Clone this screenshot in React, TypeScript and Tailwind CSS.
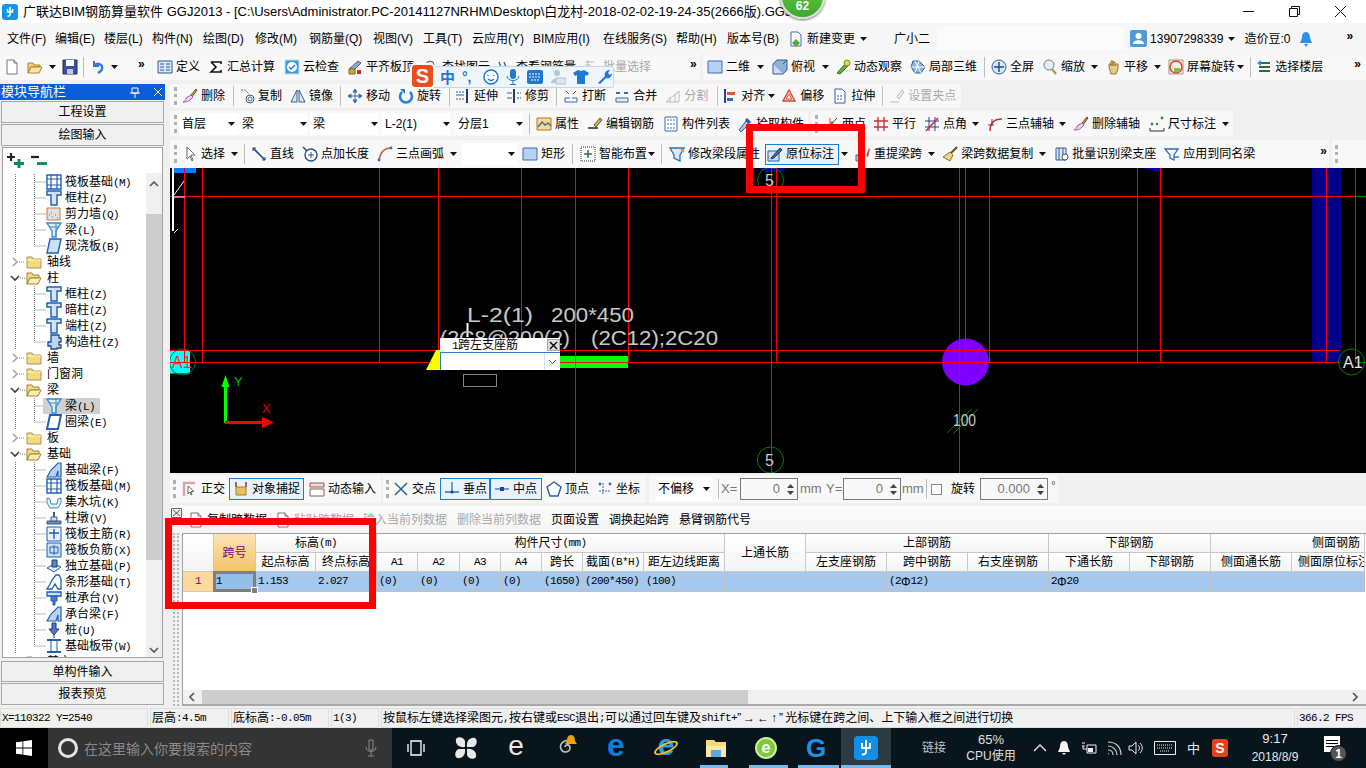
import React from "react";

const S = ({ children, w = 16, h = 16, vb }: { children: React.ReactNode; w?: number; h?: number; vb?: string }) => (
  <svg width={w} height={h} viewBox={vb || `0 0 ${w} ${h}`} className="shrink-0 block">{children}</svg>
);

const B = "#1f5fb4";
const I: Record<string, React.ReactNode> = {
  doc: <S><path d="M3 1h7l3 3v11H3z" fill="#fff" stroke="#777" /><path d="M10 1v3h3" fill="#ddd" stroke="#777" /></S>,
  open: <S><path d="M1 4h5l1 2h6v2H4L1 14z" fill="#f2cf74" stroke="#a8842c" /><path d="M4 8h11l-3 6H1z" fill="#fbe6a6" stroke="#a8842c" /></S>,
  save: <S><path d="M1 1h14v14H1z" fill="#3e4fa8" stroke="#20285c" /><path d="M4 1h8v6H4z" fill="#fff" /><path d="M5 10h6v5H5z" fill="#c8c8d8" /></S>,
  undo: <S><path d="M4 2v5h5" fill="none" stroke="#2d7fd6" strokeWidth="2" /><path d="M4 7c3-4 9-2 8 3-.4 2-2 3-4 4" fill="none" stroke="#2d7fd6" strokeWidth="2.4" /></S>,
  def: <S><path d="M1 2h14v12H1z" fill="#d9e6f5" stroke="#2a5d9c" /><path d="M3 5h4M3 8h4M3 11h4M9 5h4M9 8h4M9 11h4" stroke="#2a5d9c" /></S>,
  sigma: <S><path d="M3 3h10v2M3 3l5 5-5 5h10v-2" fill="none" stroke="#111" strokeWidth="1.6" /></S>,
  cloud: <S><path d="M1 1h14v14H1z" fill="#3d9be0" stroke="#bfe0f7" /><circle cx="8" cy="8" r="5" fill="#fff" /><path d="M5 8l2 2 4-4" fill="none" stroke="#2d7fd6" strokeWidth="1.5" /></S>,
  level: <S><path d="M2 10l9-8 3 2-8 8z" fill="#8ca7c8" stroke="#46658c" /><path d="M2 10h6v5H2z" fill="#d8a43c" stroke="#8a5c18" /><path d="M10 11h4v4h-4z" fill="#c8341c" /></S>,
  find: <S><circle cx="7" cy="6" r="4" fill="#bcd4ee" stroke="#4a6c96" /><path d="M10 9l4 5" stroke="#555" strokeWidth="2" /></S>,
  rebar: <S><path d="M2 3l4 10M7 3l4 10M2 8h12" stroke="#356aa8" strokeWidth="1.4" /></S>,
  batch: <S><path d="M1 3h9M1 6h6M4 1v13" stroke="#bbb" /><path d="M7 8h7v6H7z" fill="#eee" stroke="#bbb" /></S>,
  sq: <S><path d="M1 2h14v12H1z" fill="#b8d0f2" stroke="#3a6cb4" /></S>,
  cube: <S><path d="M1 5h10v10H1z" fill="#c8dcf4" stroke="#2d5f9c" /><path d="M1 5l4-4h10v10l-4 4M11 5l4-4" fill="#8fb0da" stroke="#2d5f9c" /></S>,
  orbit: <S><path d="M2 14l8-9 3 2-8 8z" fill="#6dae3c" stroke="#356a1c" /><circle cx="12" cy="4" r="3" fill="#e2d84c" stroke="#8a8420" /></S>,
  part: <S><path d="M3 2h6l6 6-4 6H5L1 8z" fill="#8fb4e0" stroke="#2d5f9c" /><path d="M5 2l6 12M9 2L5 14M1 8h14" stroke="#fff" /></S>,
  fit: <S><circle cx="8" cy="8" r="7" fill="#d8e6f6" stroke="#2d5f9c" /><path d="M8 3v10M3 8h10" stroke="#1c4c8c" strokeWidth="1.4" /></S>,
  mag: <S><circle cx="7" cy="6" r="5" fill="#e6eef8" stroke="#6a8098" /><path d="M10 10l4 5" stroke="#b89a40" strokeWidth="2.4" /></S>,
  hand: <S><path d="M4 8V5h2v2-5h2v5V3h2v4l1-2h2v5l-2 5H6z" fill="#e8c888" stroke="#9c7428" /></S>,
  turn: <S><path d="M1 1h14v14H1z" fill="#f4f0d8" stroke="#999" /><circle cx="8" cy="8" r="6" fill="none" stroke="#d84830" strokeWidth="1.6" /><path d="M6 9h6v4H6z" fill="#7cc04c" /></S>,
  floors: <S><path d="M3 4h11M3 8h11M3 12h11" stroke="#2d6f3c" strokeWidth="2" /><path d="M5 1L1 4l4 3" fill="#3a8fd8" /></S>,
  brush: <S><path d="M9 7l5-6 1 1-5 7z" fill="#c0a060" stroke="#6a4c20" /><path d="M9 7l2 2-3 3c-2 2-5 2-7 2 2-1 3-2 3-4z" fill="#ebd2e8" stroke="#a060a0" /></S>,
  copy: <S><circle cx="11" cy="11" r="4" fill="none" stroke="#555" /><circle cx="11" cy="11" r="2" fill="none" stroke="#2d6fb4" /><path d="M2 2h4l4 4" fill="none" stroke="#2d6fb4" strokeDasharray="2 1" /></S>,
  mirror: <S><path d="M7 2v12H1zM9 2v12h6z" fill="#d8e6f6" stroke="#3a5c8c" /></S>,
  move: <S><path d="M8 1v14M1 8h14M8 1L6 4h4zM8 15l-2-3h4zM1 8l3-2v4zM15 8l-3-2v4z" fill="#3a6fae" stroke="#3a6fae" /></S>,
  rot: <S><path d="M12 4a6 6 0 1 1-8 0" fill="none" stroke="#2d7fd6" strokeWidth="2.6" /><path d="M2 1h5v5z" fill="#2d7fd6" /></S>,
  ext: <S><path d="M1 4h8M1 11h8" stroke="#2d5f9c" strokeDasharray="2 1" /><path d="M12 1v14" stroke="#1c3c6c" strokeWidth="2" /><path d="M1 7h8" stroke="#2d5f9c" /></S>,
  trim: <S><path d="M8 1v14" stroke="#1c3c6c" strokeWidth="2" /><path d="M1 5h5M1 10h5" stroke="#2d5f9c" /><path d="M11 5h4M11 10h4" stroke="#2d5f9c" strokeDasharray="2 1" /></S>,
  brk: <S><path d="M2 10h5M9 10h5M2 10v4h12v-4" fill="none" stroke="#2d6fb4" /><path d="M3 3l3 3M13 3l-3 3" stroke="#555" /></S>,
  mrg: <S><path d="M2 10h12v4H2z" fill="#e6eef8" stroke="#2d6fb4" /><path d="M2 5h4M14 5h-4" stroke="#2d6fb4" strokeWidth="2" /></S>,
  spl: <S><path d="M1 14L14 3v11z" fill="none" stroke="#bbb" /><path d="M5 14V9M10 14V6" stroke="#bbb" /></S>,
  alg: <S><path d="M3 1v14" stroke="#2d3f9c" strokeWidth="2" /><path d="M5 4h8v3H5z" fill="#e8503c" /><path d="M5 10h6v3H5z" fill="#2d6fb4" /></S>,
  off: <S><path d="M8 2l6 11H2z" fill="#f8d8d0" stroke="#d84830" strokeWidth="1.4" /><path d="M8 6l3 5H5z" fill="#fff" stroke="#d84830" /></S>,
  str: <S><path d="M3 1h7l3 3v11H3z" fill="#fff" stroke="#2d5f9c" /><path d="M5 8h6M5 11h6" stroke="#2d5f9c" strokeDasharray="2 1" /></S>,
  setg: <S><path d="M1 14h9" stroke="#bbb" /><path d="M8 9l5-7 2 2-5 7z" fill="#eee" stroke="#bbb" /></S>,
  attr: <S><path d="M1 2h14v12H1z" fill="#f6d890" stroke="#a87c28" /><path d="M2 11l4-5 3 3 3-2 3 3" fill="none" stroke="#4a6c96" strokeWidth="1.4" /></S>,
  edit: <S><path d="M1 12h10" stroke="#333" strokeWidth="1.6" /><path d="M7 9l6-7 2 2-6 7z" fill="#d0b070" stroke="#6a4c20" /></S>,
  list: <S><path d="M2 1h12v14H2z" fill="#fff" stroke="#3a6cb4" /><path d="M4 4h8M4 8h8M4 12h8" stroke="#3a6cb4" strokeDasharray="2 1" /></S>,
  pick: <S><path d="M2 14l7-9 3 3-8 8z" fill="#a8c4e8" stroke="#2d5f9c" /><path d="M9 3l4 4" stroke="#2d5f9c" strokeWidth="3" /></S>,
  two: <S><path d="M3 14L14 2" stroke="#444" /><path d="M7 2v13M1 9h13" stroke="#d84830" /><circle cx="9" cy="7" r="1.4" fill="#3a8f3c" /></S>,
  par: <S><path d="M5 1v14M11 1v14M1 5h14M1 11h14" stroke="#d02c2c" strokeWidth="1.3" /></S>,
  ang: <S><path d="M5 1v14M11 1v14M1 5h14M1 11h14" stroke="#2d3f9c" /><path d="M2 15L14 2" stroke="#d02c2c" strokeWidth="1.6" /></S>,
  arc3: <S><path d="M3 15C3 7 7 3 15 3" fill="none" stroke="#d02c2c" strokeWidth="1.5" /><path d="M1 9h6M5 3v6" stroke="#444" /></S>,
  dim: <S><path d="M1 15h14M1 12v3M15 12v3" stroke="#333" /><circle cx="3" cy="8" r="1.4" fill="#3a8f3c" /><circle cx="13" cy="2" r="1.4" fill="#3a8f3c" /><circle cx="8" cy="8" r="1.2" fill="#3a8f3c" /></S>,
  sel: <S><path d="M5 1v12l3-3 2 5 1-1-2-5h4z" fill="#fff" stroke="#667" /></S>,
  line: <S><path d="M2 2l12 12" stroke="#1f4f8c" strokeWidth="1.6" /><path d="M2 2v3M2 2h3M14 14v-3M14 14h-3" stroke="#1f4f8c" /></S>,
  plen: <S><circle cx="9" cy="9" r="6" fill="#fff" stroke="#2d4f8c" strokeWidth="1.4" /><path d="M9 6v6M6 9h6" stroke="#2d4f8c" /><path d="M1 1l4 4" stroke="#2d4f8c" strokeWidth="1.6" /></S>,
  arc: <S><path d="M2 15C3 7 7 2 14 2" fill="none" stroke="#d06030" strokeWidth="1.7" /><circle cx="2" cy="14" r="1.4" fill="#2d6fb4" /><circle cx="14" cy="2" r="1.4" fill="#2d6fb4" /></S>,
  smart: <S><path d="M1 1h14v14H1z" fill="#fff" stroke="#333" strokeDasharray="1 1" /><path d="M8 4v8M4 8h8" stroke="#2d6f3c" strokeWidth="1.5" /></S>,
  funnel: <S><path d="M1 2h14l-4 7v6l-6-3V9z" fill="#d8e6f6" stroke="#2d6fb4" strokeWidth="1.3" /><path d="M12 3l3 3" stroke="#d8a43c" strokeWidth="2" /></S>,
  mark: <S><path d="M1 5h11v10H1z" fill="#cfe0f4" stroke="#2d5f9c" /><path d="M5 11l8-9 2 2-8 8-3 1z" fill="#3a6cb4" stroke="#1c3c6c" /></S>,
  rex: <S><path d="M1 15V9h3v6zM6 15V9h3v6z" fill="#a8c4e8" stroke="#4a6c96" /><path d="M11 10l3-8 1 1-2 8z" fill="#d84830" /></S>,
  broom: <S><path d="M15 1L8 8" stroke="#6a4c20" strokeWidth="2" /><path d="M8 6l3 3-3 6-7-4z" fill="#ecd88c" stroke="#8a7020" /></S>,
  bid: <S><path d="M3 2h10v12H3z" fill="#dde8f4" stroke="#2d5f9c" /><path d="M6 2v12M10 2v12" stroke="#2d5f9c" /><circle cx="12" cy="11" r="3" fill="#fff" stroke="#555" /></S>,
  app: <S><path d="M1 3h13l-4 6v5l-4-2V9z" fill="#fff" stroke="#2d6fb4" strokeWidth="1.3" /><path d="M10 11h5" stroke="#2d6fb4" strokeWidth="1.3" /></S>,
  ortho: <S><path d="M2 15V2h11" fill="none" stroke="#d8a8a0" strokeWidth="2.4" /><path d="M6 5v8l2-2 1 3 1-.5-1-3h3z" fill="#fff" stroke="#667" /></S>,
  snap: <S><path d="M3 1v5M13 1v5" stroke="#7a4020" strokeWidth="1.5" /><path d="M3 6h10v8H3z" fill="#e8c060" stroke="#a87c28" /></S>,
  dyn: <S><path d="M1 2h14v4H1z" fill="#f8d8d0" stroke="#8a6050" /><path d="M1 8h14v7H1z" fill="#fff" stroke="#8a6050" /></S>,
  cross: <S><path d="M2 2l12 12M14 2L2 14" stroke="#2d5f9c" strokeWidth="1.5" /></S>,
  perp: <S><path d="M8 1v10M1 11h14" stroke="#2d6fb4" strokeWidth="1.3" /><circle cx="8" cy="11" r="1.6" fill="#1f3f9c" /></S>,
  mid: <S><path d="M1 8h14" stroke="#2d6fb4" strokeWidth="1.3" /><rect x="6" y="6" width="4" height="4" fill="#1f3f9c" /></S>,
  pent: <S><path d="M8 1l7 5-3 9H4L1 6z" fill="#fff" stroke="#2d5f9c" strokeWidth="1.4" /></S>,
  coord: <S><path d="M6 2v12M2 10h12" stroke="#2d6fb4" strokeDasharray="2 1" /><circle cx="3" cy="3" r="1.4" fill="#2d6fb4" /><circle cx="13" cy="3" r="1.4" fill="#2d6fb4" /></S>,
  chg: <S><path d="M3 1h7l3 3v11H3z" fill="#fff" stroke="#3a6cb4" /><path d="M8 8l4 4-4 4-4-4z" fill="#5aa838" /></S>,
  user: <S w={17} h={17}><rect width="17" height="17" rx="2" fill="#4f9ad8" /><circle cx="8.5" cy="6" r="3" fill="#fff" /><path d="M3 14c0-5 11-5 11 0z" fill="#fff" /></S>,
  bell: <S><path d="M8 1c3 0 4 3 4 6l2 5H2l2-5c0-3 1-6 4-6z" fill="#2d8fe8" /><path d="M6 13h4l-2 3z" fill="#2d8fe8" /></S>,
};

const Tc = {
  col: <S><path d="M1 1h14v4h-4v10H5V5H1z" fill="#d4e4f8" stroke={B} strokeWidth="1.4" /></S>,
  beam: <S><path d="M1 1h14L10 9v6H6V9z" fill="#dcecfa" stroke="#3a8cd0" strokeWidth="1.3" /><path d="M4 5h8M10 1v14" stroke="#3a8cd0" /></S>,
  wall: <S><path d="M1 2h13v12H1z" fill="#e0e0e0" stroke="#d87830" /><path d="M3 9h1M6 11h1M9 9h1M11 12h1M5 7h1" stroke="#777" /></S>,
  slab: <S><path d="M4 1h11l-3 14H1z" fill="#cde0f8" stroke={B} strokeWidth="1.4" /></S>,
  raft: <S><path d="M1 1h14v14H1z" fill="#fff" stroke={B} strokeWidth="1.4" /><path d="M5 1v14M11 1v14M1 5h14M1 11h14" stroke={B} strokeWidth="1.2" /></S>,
  gz: <S><path d="M5 1h8v3h2v4h-2v3h2v3h-4v1H5v-3H2V8h3z" fill="#bcd4f0" stroke="#1c4c8c" strokeWidth="1.3" /></S>,
  fb: <S><path d="M1 15l4-7 7-7h3v14h-3V9l-2 6z" fill="#b8d4f4" stroke={B} strokeWidth="1.2" /></S>,
  pit: <S><path d="M1 4l3 1 1 5h6l1-5 3-1v5l-3 5H4L1 9z" fill="#e4effa" stroke="#3a8cd0" /></S>,
  pier: <S><path d="M1 11h14v3H1z" fill="#6c8ab0" stroke="#3a5c8c" /><path d="M5 7h6v4H5z" fill="#d0d8e4" stroke="#3a5c8c" /><path d="M7 2h2v5H7z" fill="#3a5c8c" /></S>,
  rm: <S><path d="M1 1h14v14H1z" fill="#e8f0fb" stroke={B} /><path d="M8 3v10M3 7h10" stroke={B} strokeWidth="1.4" /></S>,
  rn: <S><path d="M1 1h14v14H1z" fill="#cfe0f6" stroke={B} /><path d="M4 5h8v6H4zM8 3v10" fill="none" stroke={B} /></S>,
  iso: <S><path d="M1 10l7-4 7 3-7 5z" fill="#dce8f6" stroke={B} /><path d="M6 2h5v7H6z" fill="#5c88c0" stroke="#1c3c6c" /></S>,
  st: <S><path d="M1 15l3-5 2-4 4-5h3l2 4v10h-3l-3-5-3 5z" fill="#fff" stroke={B} strokeWidth="1.3" /></S>,
  cap: <S><path d="M1 2h14v4H1z" fill="#cde0f8" stroke={B} strokeWidth="1.3" /><path d="M5 6h6v5H5zM7 11h2v4H7z" fill="#4a7cc0" stroke={B} /></S>,
  pile: <S><path d="M6 1h4v6h3l-5 6-5-6h3z" fill="#4a7cc0" stroke="#1c3c6c" /><path d="M8 13v3" stroke="#1c3c6c" /></S>,
  band: <S><path d="M1 2h14M1 14h14" stroke={B} strokeWidth="2" /><path d="M5 2v12M11 2v12" stroke={B} /></S>,
  ring: <S><path d="M4 1h11l-3 14H1z" fill="#fff" stroke={B} strokeWidth="2" /></S>,
};

const Sim = ({ t }: { t: string }) => (
  <>
    {t.split(/([\x00-\x7f]+)/).filter(Boolean).map((p, i) =>
      /^[\x00-\x7f]/.test(p) ? (
        <span key={i} className="font-['Liberation_Mono'] text-[11px] tracking-[-0.6px]">{p}</span>
      ) : (
        <span key={i}>{p}</span>
      )
    )}
  </>
);

const T = ({ i, t, c = "", g = false }: { i: string; t: string; c?: string; g?: boolean }) => (
  <div className={`flex items-center gap-[3px] shrink-0 ${c} ${g ? "text-[#a8a8a8]" : ""}`}>
    {I[i]}
    <span className="whitespace-nowrap leading-4">{t}</span>
  </div>
);
const Caret = ({ c = "" }: { c?: string }) => (
  <svg width="7" height="4" viewBox="0 0 7 4" className={`shrink-0 ${c}`}><path d="M0 0h7L3.5 4z" fill="#111" /></svg>
);
const Sep = ({ c = "" }: { c?: string }) => <div className={`w-px h-[20px] bg-[#bdbdbd] shrink-0 ${c}`} />;
const Grip = ({ c = "" }: { c?: string }) => <div className={`w-[3px] h-[18px] border-l-[3px] border-dotted border-[#b0b0b0] shrink-0 ${c}`} />;
const More = ({ c = "" }: { c?: string }) => <span className={`text-[12px] leading-3 font-bold shrink-0 -mt-[6px] ${c}`}>»</span>;
const Sel = ({ t, c }: { t: string; c: string }) => (
  <div className={`h-[22px] bg-white flex items-center justify-between pl-[3px] shrink-0 ${c}`}>
    <span>{t}</span>
    <Caret />
  </div>
);
const Bar = ({ c, children }: { c: string; children?: React.ReactNode }) => (
  <div className={`flex items-center bg-[#f8f8f8] rounded-[2px] shrink-0 ${c}`}>{children}</div>
);

const Menu = ({ t, c }: { t: string; c: string }) => <span className={`shrink-0 whitespace-nowrap ${c}`}>{t}</span>;

type Row = { k: "f" | "o" | "c"; t: string; i?: React.ReactNode; last?: boolean; sel?: boolean };
const rows: Row[] = [
  { k: "c", t: "筏板基础(M)", i: Tc.raft },
  { k: "c", t: "框柱(Z)", i: Tc.col },
  { k: "c", t: "剪力墙(Q)", i: Tc.wall },
  { k: "c", t: "梁(L)", i: Tc.beam },
  { k: "c", t: "现浇板(B)", i: Tc.slab, last: true },
  { k: "f", t: "轴线" },
  { k: "o", t: "柱" },
  { k: "c", t: "框柱(Z)", i: Tc.col },
  { k: "c", t: "暗柱(Z)", i: Tc.col },
  { k: "c", t: "端柱(Z)", i: Tc.col },
  { k: "c", t: "构造柱(Z)", i: Tc.gz, last: true },
  { k: "f", t: "墙" },
  { k: "f", t: "门窗洞" },
  { k: "o", t: "梁" },
  { k: "c", t: "梁(L)", i: Tc.beam, sel: true },
  { k: "c", t: "圈梁(E)", i: Tc.ring, last: true },
  { k: "f", t: "板" },
  { k: "o", t: "基础" },
  { k: "c", t: "基础梁(F)", i: Tc.fb },
  { k: "c", t: "筏板基础(M)", i: Tc.raft },
  { k: "c", t: "集水坑(K)", i: Tc.pit },
  { k: "c", t: "柱墩(V)", i: Tc.pier },
  { k: "c", t: "筏板主筋(R)", i: Tc.rm },
  { k: "c", t: "筏板负筋(X)", i: Tc.rn },
  { k: "c", t: "独立基础(P)", i: Tc.iso },
  { k: "c", t: "条形基础(T)", i: Tc.st },
  { k: "c", t: "桩承台(V)", i: Tc.cap },
  { k: "c", t: "承台梁(F)", i: Tc.fb },
  { k: "c", t: "桩(U)", i: Tc.pile },
  { k: "c", t: "基础板带(W)", i: Tc.band, last: true },
  { k: "f", t: "其它" },
];

const Folder = ({ open }: { open: boolean }) => (
  <S>
    {open ? (
      <>
        <path d="M1 3h5l1 2h6v3H4l-3 6z" fill="#f4d98c" stroke="#a8842c" />
        <path d="M4 8h11l-3 6H1z" fill="#fdeebc" stroke="#a8842c" />
      </>
    ) : (
      <>
        <path d="M1 3h5l1 2h8v9H1z" fill="#f7d97e" stroke="#b0944a" />
        <path d="M1 6h14" stroke="#fff3c8" />
      </>
    )}
  </S>
);

const TreeRow = ({ r }: { r: Row }) => {
  const child = r.k === "c";
  return (
    <div className="h-4 flex items-center relative shrink-0">
      <svg width="46" height="16" viewBox="0 0 46 16" className="shrink-0 block">
        {child ? (
          <>
            <path d="M15.5 0v16" stroke="#777" strokeDasharray="1 1" />
            <path d={r.last ? "M34.5 0v8h11" : "M34.5 0v16M34.5 8h11"} fill="none" stroke="#777" strokeDasharray="1 1" />
          </>
        ) : r.k === "f" ? (
          <>
            <path d="M13 4l4 4-4 4" fill="none" stroke="#a6a6a6" strokeWidth="1.6" />
            <path d="M19 8h6" stroke="#777" strokeDasharray="1 1" />
            <foreignObject x="26" y="0" width="16" height="16"><Folder open={false} /></foreignObject>
          </>
        ) : (
          <>
            <path d="M11 6l4 4 4-4" fill="none" stroke="#404040" strokeWidth="1.6" />
            <path d="M20 8h5" stroke="#777" strokeDasharray="1 1" />
            <foreignObject x="26" y="0" width="16" height="16"><Folder open /></foreignObject>
          </>
        )}
      </svg>
      {child ? (
        <div className={`flex items-center h-4 ${r.sel ? "bg-[#d0d0d0] -ml-[3px] pl-[3px] pr-[5px]" : ""}`}>
          {r.i}
          <span className="ml-[3px] whitespace-nowrap leading-4"><Sim t={r.t} /></span>
        </div>
      ) : (
        <span className="ml-px whitespace-nowrap leading-4"><Sim t={r.t} /></span>
      )}
    </div>
  );
};

const Left = () => (
  <div className="w-[165px] h-[622px] shrink-0 flex flex-col">
    <div className="h-[16px] bg-[#0b5ed7] text-white flex items-center pl-px text-[13px] shrink-0">
      <span className="flex-1">模块导航栏</span>
      <svg width="10" height="11" viewBox="0 0 10 11" className="mr-[14px]"><path d="M2 1h6v5H2zM0 6h10M5 6v5" fill="none" stroke="#fff" /></svg>
      <svg width="8" height="8" viewBox="0 0 8 8" className="mr-[3px]"><path d="M0 0l8 8M8 0L0 8" stroke="#fff" /></svg>
    </div>
    <div className="h-[22px] mt-px mx-px bg-[#f0f0f0] border border-[#a8a8a8] flex items-center justify-center shrink-0">工程设置</div>
    <div className="h-[22px] mt-px mx-px bg-[#f0f0f0] border border-[#a8a8a8] flex items-center justify-center shrink-0">绘图输入</div>
    <div className="mt-px mx-[2px] h-[511px] border border-[#a0a0a0] bg-white shrink-0 flex flex-col overflow-hidden relative">
      <div className="h-[25px] flex items-center pl-[3px] gap-[6px] shrink-0">
        <S w={18} h={15}><path d="M5 0v8M1 4h8" stroke="#222" strokeWidth="2.200" /><path d="M13 6v9M8 10.500h10" stroke="#0a8a5a" strokeWidth="2.800" /></S>
        <S w={18} h={15}><path d="M1 4h8" stroke="#222" strokeWidth="2.200" /><path d="M7 10.500h10" stroke="#0a8a5a" strokeWidth="2.800" /></S>
      </div>
      <div className="flex min-h-0 flex-1">
        <div className="flex-1 flex flex-col overflow-hidden -ml-[3px]"><div className="h-[1px] shrink-0" />{rows.map((r, i) => <TreeRow key={i} r={r} />)}</div>
        <div className="w-[16px] bg-[#f0f0f0] flex flex-col items-center shrink-0">
          <svg width="10" height="6" viewBox="0 0 10 6" className="mt-[8px] shrink-0"><path d="M1 5l4-4 4 4" fill="none" stroke="#555" strokeWidth="1.6" /></svg>
          <div className="w-full h-[346px] mt-[27px] bg-[#cdcdcd] shrink-0" />
          <svg width="10" height="6" viewBox="0 0 10 6" className="mt-[87px] shrink-0"><path d="M1 1l4 4 4-4" fill="none" stroke="#555" strokeWidth="1.6" /></svg>
        </div>
      </div>
    </div>
    <div className="h-[21px] mt-[3px] mx-px bg-[#f0f0f0] border border-[#a8a8a8] flex items-center justify-center shrink-0">单构件输入</div>
    <div className="h-[22px] mt-px mx-px bg-[#f0f0f0] border border-[#a8a8a8] flex items-center justify-center shrink-0">报表预览</div>
  </div>
);

const Canvas = () => {
  const red = "#ff0000";
  const long = [184.5, 202.5, 379.5, 438.5, 521.5, 628.5, 771.5, 776.5, 959.5, 965.5, 989.5, 1137.5, 1160.5, 1326.5, 1355.5];
  return (
    <div className="h-[305px] shrink-0 bg-black relative overflow-hidden">
      <svg width="1196" height="305" viewBox="170 168 1196 305" className="block">
        <rect x="174" y="168" width="22" height="5" fill="#0080ff" />
        <path d="M760 168h27l-6 4h-15zM1142 168h18v4z" fill="#0000b0" />
        <rect x="1312" y="168" width="29" height="194" fill="#00008b" />
        <rect x="170" y="350.5" width="20" height="23" fill="#00ffff" />
        <rect x="560" y="356" width="68" height="12" fill="#00ff00" />
        <ellipse cx="965.5" cy="362" rx="23.5" ry="23.5" fill="#8000ff" />
        {long.map((x) => <path key={x} d={`M${x} 168V362`} stroke={red} />)}
        <path d="M575.5 168V473" stroke={red} />
        <path d="M170 196.5H1356M170 350.5H1340M170 362.5H1340" stroke={red} />
        <path d="M771.5 362V473M959.5 362V473M1356 196.5h10M1356 362.5h10" stroke="#008000" />
        <path d="M173 168v63" stroke="#fff" strokeWidth="2" />
        <path d="M172 197h13M174 195l10-14M174 233l4-4" stroke="#fff" />
        <path d="M467.5 323v14" stroke="#fff" strokeWidth="2" />
        <path d="M426 370l10-20h4v20z" fill="#ffff00" />
        <rect x="463.5" y="374.5" width="33" height="12" fill="none" stroke="#808080" />
        <path d="M225.5 375l-4 12h2.500v36h3v-36h2.500z" fill="#00ff00" />
        <path d="M225 424v-3h37v-4l12 5.500-12 5.500v-4z" fill="#ff0000" />
        <text x="234" y="386" fill="#00c000" fontSize="13" fontFamily="Liberation Sans">Y</text>
        <text x="262" y="413" fill="#e00000" fontSize="13" fontFamily="Liberation Sans">X</text>
        <g fill="none" stroke="#008000">
          <circle cx="182.5" cy="362" r="13" />
          <circle cx="1351.5" cy="362" r="13" />
          <circle cx="770.500" cy="180.500" r="13" />
          <circle cx="770.500" cy="460" r="13" />
          <path d="M947 433l24.500-24M953 434l25-25" />
        </g>
        <g fontFamily="Liberation Sans" fill="#c8c8c8">
          <text x="172" y="368" fontSize="16" fill="#ff3030">A1</text>
          <text x="1343" y="368" fontSize="16" fill="#e8e8e8">A1</text>
          <text x="765" y="186" fontSize="16">5</text>
          <text x="765" y="466" fontSize="16">5</text>
          <text x="953" y="426" fontSize="16" textLength="23" lengthAdjust="spacingAndGlyphs">100</text>
          <text x="467" y="322" fontSize="20" textLength="66" lengthAdjust="spacingAndGlyphs">L-2(1)</text>
          <text x="551" y="322" fontSize="20" textLength="83" lengthAdjust="spacingAndGlyphs">200*450</text>
          <text x="440" y="345" fontSize="20" textLength="130" lengthAdjust="spacingAndGlyphs">(2C8@200(2)</text>
          <text x="591" y="345" fontSize="20" textLength="127" lengthAdjust="spacingAndGlyphs">(2C12);2C20</text>
        </g>
      </svg>
      <div className="absolute left-[270px] top-[170px] w-[120px] h-[32px] bg-white flex flex-col">
        <div className="h-[14px] flex items-center justify-between shrink-0">
          <span className="pl-[12px] leading-3"><Sim t="1跨左支座筋" /></span>
          <div className="w-[13px] h-[12px] bg-[#dcdcdc] border border-[#aaa] flex items-center justify-center">
            <svg width="9" height="9" viewBox="0 0 9 9"><path d="M1 1l7 7M8 1L1 8" stroke="#000" strokeWidth="1.4" /></svg>
          </div>
        </div>
        <div className="flex-1 border-t border-l border-[#2f7fc8] flex justify-end">
          <div className="w-[16px] border-l border-[#cfe0f0] flex items-center justify-center">
            <svg width="9" height="6" viewBox="0 0 9 6"><path d="M1 1l3.500 3.500L8 1" fill="none" stroke="#555" /></svg>
          </div>
        </div>
      </div>
    </div>
  );
};

const Spin = ({ v, c }: { v: string; c: string }) => (
  <div className={`h-[22px] border border-[#7a7a7a] bg-[#f8f8f8] flex items-center justify-end shrink-0 text-[#777] ${c}`}>
    <span className="text-[13px]">{v}</span>
    <div className="w-[13px] ml-[4px] flex flex-col items-center gap-[3px]">
      <svg width="7" height="4" viewBox="0 0 7 4"><path d="M0 4h7L3.500 0z" fill="#444" /></svg>
      <svg width="7" height="4" viewBox="0 0 7 4"><path d="M0 0h7L3.500 4z" fill="#444" /></svg>
    </div>
  </div>
);

const Status = () => (
  <div className="h-[28px] mt-[2px] flex items-center shrink-0">
    <Bar c="w-[211px] h-[28px] pl-[3px]">
      <Grip />
      <T i="ortho" t="正交" c="ml-[6px]" />
      <T i="snap" t="对象捕捉" c="ml-[4px] w-[75px] h-[22px] pl-[3px] border border-[#1a7fd4] bg-[#e8f2fb]" />
      <T i="dyn" t="动态输入" c="ml-[5px]" />
    </Bar>
    <Bar c="ml-[2px] w-[263px] h-[28px] pl-[3px]">
      <Grip />
      <T i="cross" t="交点" c="ml-[4px]" />
      <T i="perp" t="垂点" c="ml-[4px] w-[50px] h-[22px] pl-[3px] border border-[#1a7fd4] bg-[#e8f2fb]" />
      <T i="mid" t="中点" c="w-[52px] h-[22px] pl-[3px] border border-[#1a7fd4] bg-[#e8f2fb]" />
      <T i="pent" t="顶点" c="ml-[4px]" />
      <T i="coord" t="坐标" c="ml-[8px]" />
    </Bar>
    <Bar c="ml-[3px] w-[409px] h-[28px] pl-[7px]">
      <div className="w-[56px] h-[24px] bg-white flex items-center justify-between pl-[2px] pr-[2px] shrink-0">
        <span>不偏移</span>
        <Caret />
      </div>
      <Sep c="ml-[6px]" />
      <span className="ml-[2px] w-[19px] text-[13px] text-[#777] shrink-0">X=</span>
      <Spin v="0" c="w-[58px]" />
      <span className="ml-[2px] w-[26px] text-[13px] text-[#777] shrink-0">mm</span>
      <span className="w-[17px] text-[13px] text-[#777] shrink-0">Y=</span>
      <Spin v="0" c="w-[58px]" />
      <span className="ml-px w-[24px] text-[13px] text-[#777] shrink-0">mm</span>
      <Sep />
      <div className="ml-[4px] w-[11px] h-[11px] border border-[#888] bg-white shrink-0" />
      <span className="ml-[9px] shrink-0">旋转</span>
      <Spin v="0.000" c="ml-[5px] w-[68px]" />
      <span className="ml-[3px] text-[#555] shrink-0 -mt-[6px]">°</span>
    </Bar>
  </div>
);

const H = ({ t, c = "" }: { t: string; c?: string }) => (
  <div className={`border-r border-b border-[#c8c8c8] bg-gradient-to-b from-white to-[#f4f4f4] flex items-center justify-center overflow-hidden whitespace-nowrap ${c}`}>
    <Sim t={t} />
  </div>
);
const D = ({ t = "", c = "" }: { t?: string; c?: string }) => (
  <div className={`border-r border-b border-[#c0c0c0] bg-[#a6c8ec] flex items-center pl-[2px] overflow-hidden whitespace-nowrap ${c}`}>
    <Sim t={t} />
  </div>
);

const Table = () => (
  <div className="flex-1 min-h-0 flex">
    <div className="w-[12px] bg-[#f0f0f0] shrink-0 flex justify-center">
      <div className="w-[6px] h-full border-x-2 border-dotted border-[#b8b8b8]" />
    </div>
    <div className="flex-1 border-l border-[#a0a0a0] border-t border-b-2 border-b-[#a8a8a8] bg-white flex flex-col min-w-0">
      <div className="flex-1 min-h-0">
        <div className="grid grid-cols-[31px_42px_60px_61px_41px_42px_41px_41px_41px_61px_81px_81px_81px_81px_81px_81px_81px_81px_73px] grid-rows-[19px_19px_20px]">
          <H t="" c="row-span-2" />
          <div className="row-span-2 bg-gradient-to-b from-[#fde3b4] to-[#f3c367] border-r border-b border-[#c8c8c8] text-[#800080] flex items-center justify-center">跨号</div>
          <H t="标高(m)" c="col-span-2" />
          <H t="构件尺寸(mm)" c="col-span-7" />
          <H t="上通长筋" c="row-span-2" />
          <H t="上部钢筋" c="col-span-3" />
          <H t="下部钢筋" c="col-span-2" />
          <H t="侧面钢筋" c="col-span-2 justify-end pr-[4px]" />
          {["起点标高", "终点标高", "A1", "A2", "A3", "A4", "跨长", "截面(B*H)", "距左边线距离", "左支座钢筋", "跨中钢筋", "右支座钢筋", "下通长筋", "下部钢筋", "侧面通长筋", "侧面原位标注"].map((t, i) => (
            <H key={i} t={t} c={t === "侧面原位标注" ? "justify-start pl-[6px]" : ""} />
          ))}
          <div className="bg-[#fbd99a] border-r border-b border-[#c8c8c8] flex items-center justify-center text-[#800080]"><Sim t="1" /></div>
          <div className="bg-[#93bfe9] border-[3px] border-[#7f7f7f] flex items-center relative -mt-px -ml-px"><Sim t="1" /><div className="absolute -right-[5px] -bottom-[5px] w-[5px] h-[5px] bg-[#7f7f7f] border border-white box-content" /></div>
          <D t="1.153" />
          <D t="2.027" />
          <D t="(0)" />
          <D t="(0)" />
          <D t="(0)" />
          <D t="(0)" />
          <D t="(1650)" />
          <D t="(200*450)" />
          <D t="(100)" />
          <D />
          <D />
          <D t="(2Φ12)" />
          <D />
          <D t="2Φ20" />
          <D />
          <D />
          <D />
        </div>
      </div>
      <div className="h-[14px] bg-[#f0f0f0] flex items-center shrink-0">
        <svg width="6" height="10" viewBox="0 0 6 10" className="ml-[6px]"><path d="M5 1L1 5l4 4" fill="none" stroke="#555" strokeWidth="1.6" /></svg>
        <div className="ml-[7px] w-[546px] h-full bg-[#cdcdcd]" />
        <svg width="6" height="10" viewBox="0 0 6 10" className="ml-auto mr-[8px]"><path d="M1 1l4 4-4 4" fill="none" stroke="#555" strokeWidth="1.6" /></svg>
      </div>
    </div>
  </div>
);

const Cell = ({ c, children }: { c: string; children: React.ReactNode }) => (
  <div className={`h-[20px] bg-[#f0f0f0] border border-[#dedede] flex items-center pl-px overflow-hidden whitespace-nowrap shrink-0 ${c}`}>{children}</div>
);

const tiles = "w-[50px] h-[40px] flex items-center justify-center shrink-0 relative";
const Under = ({ c }: { c: string }) => <div className={`absolute bottom-0 h-[3px] bg-[#76b9ed] ${c}`} />;
const Taskbar = () => (
  <div className="h-[40px] bg-[#08151c] flex items-center text-white shrink-0">
    <div className="w-[48px] h-full bg-black flex items-center justify-center shrink-0">
      <svg width="16" height="16" viewBox="0 0 16 16"><path d="M0 2.300l6.500-.9v6.200H0zM7.300 1.300L16 0v7.600H7.300zM0 8.400h6.500v6.200L0 13.700zM7.300 8.400H16V16l-8.700-1.300z" fill="#fff" /></svg>
    </div>
    <div className="w-[344px] h-full bg-[#343434] flex items-center shrink-0">
      <div className="ml-[10px] w-[20px] h-[20px] rounded-full border-[3px] border-[#e4e4e4] shrink-0" />
      <span className="ml-[6px] text-[14px] text-[#8a8a8a] flex-1 font-['Noto_Sans_CJK_SC']">在这里输入你要搜索的内容</span>
      <svg width="12" height="18" viewBox="0 0 12 18" className="mr-[15px]"><path d="M4 1h4v10H4zM1 8c0 6 10 6 10 0M6 13v4M3 17h6" fill="none" stroke="#8a8a8a" /></svg>
    </div>
    <div className={`${tiles} -ml-px`}><svg width="20" height="16" viewBox="0 0 20 16"><path d="M5 1h10v14H5zM2 4v8M18 4v8" fill="none" stroke="#fff" strokeWidth="1.3" /></svg></div>
    <div className={tiles}><svg width="24" height="24" viewBox="0 0 24 24"><g fill="#e8e8e8"><path d="M11 11C5 12 1 8 2 3c2-3 8-2 9 2zM13 11c-1-6 3-10 8-9 3 2 2 8-2 9zM13 13c6-1 10 3 9 8-2 3-8 2-9-2zM11 13c1 6-3 10-8 9-3-2-2-8 2-9z" /></g></svg></div>
    <div className={tiles}>
      <span className="text-[28px] leading-none text-[#e8e8e8] font-['Liberation_Sans'] -mt-1">e</span>
    </div>
    <div className={tiles}>
      <svg width="28" height="26" viewBox="0 0 28 26"><path d="M13 12c0-3 5-3 5 1s-7 6-9 1 3-10 9-8" fill="none" stroke="#c0c0c0" strokeWidth="1.6" /><path d="M19 0c3 0 4 3 4 6l2 3H13l2-3c0-3 1-6 4-6z" fill="#e8a80c" /></svg>
    </div>
    <div className={tiles}><span className="text-[32px] leading-none font-bold text-[#0f7dd8] font-['Liberation_Sans'] -mt-[6px]">e</span></div>
    <div className={tiles}>
      <div className="relative w-[26px] h-[26px] flex items-center justify-center">
        <span className="text-[30px] leading-none font-bold text-[#2f9be8] font-['Liberation_Sans'] -mt-[6px]">e</span>
        <div className="absolute inset-x-0 top-[8px] h-[10px] rounded-[50%] border-2 border-[#e8c020] -rotate-[25deg]" />
      </div>
    </div>
    <div className={tiles}>
      <svg width="22" height="20" viewBox="0 0 22 20"><path d="M1 2h8l2 2h10v15H1z" fill="#f8d878" /><path d="M1 8h20v11H1z" fill="#fce8a8" /><path d="M6 12h10v7H6z" fill="#5aa8e0" /></svg>
      <Under c="left-[9px] w-[28px]" />
    </div>
    <div className={tiles}>
      <div className="w-[22px] h-[22px] rounded-full bg-[#7ec83c] border-2 border-[#c8f0a0] flex items-center justify-center text-white text-[16px] font-bold font-['Liberation_Sans'] leading-none">e</div>
      <Under c="left-[8px] w-[39px]" />
    </div>
    <div className={tiles}><span className="text-[26px] leading-none font-bold text-[#1e90e8] font-['Liberation_Sans']">G</span><Under c="left-[7px] w-[41px]" /></div>
    <div className={`${tiles} bg-[#2d3a42]`}>
      <div className="w-[24px] h-[24px] rounded-[4px] bg-[#0f8fe8] flex items-center justify-center">
        <svg width="16" height="18" viewBox="0 0 16 18"><path d="M8 1v12M4 4v5h8V4M8 13c0 2-2 3-4 2" fill="none" stroke="#fff" strokeWidth="2" /></svg>
      </div>
      <Under c="left-0 w-full" />
    </div>
    <span className="ml-[31px] text-[12px] text-[#c4c4c4] shrink-0">链接</span>
    <div className="ml-[15px] w-[60px] flex flex-col items-center leading-4 text-[#e0e0e0] shrink-0">
      <span className="text-[13px]">65%</span>
      <span className="text-[12px]">CPU使用</span>
    </div>
    <svg width="16" height="16" viewBox="0 0 16 16" className="ml-[11px] shrink-0"><path d="M2 11l6-6 6 6" fill="none" stroke="#eee" strokeWidth="1.3" /></svg>
    <svg width="16" height="16" viewBox="0 0 16 16" className="ml-[8px] shrink-0"><path d="M8 1c3 0 4 3 4 6l2 5H2l2-5c0-3 1-6 4-6zM6 13h4l-2 2z" fill="#f4f4f4" /></svg>
    <svg width="16" height="16" viewBox="0 0 16 16" className="ml-[9px] shrink-0"><path d="M1 3h3M1 6h3M2 6v3h4M6 5h9v8H6z" fill="none" stroke="#eee" /><path d="M7 8h5v4H7z" fill="#eee" /></svg>
    <svg width="16" height="16" viewBox="0 0 16 16" className="ml-[9px] shrink-0"><path d="M2 14a1 1 0 0 1 1 0M2 10c3 0 5 2 5 5M2 6c5 0 9 4 9 9M2 2c8 0 13 5 13 13" fill="none" stroke="#ccc" strokeWidth="1.2" /></svg>
    <svg width="16" height="16" viewBox="0 0 16 16" className="ml-[6px] shrink-0"><path d="M1 6h3l4-4v12l-4-4H1zM10 5c2 2 2 4 0 6M12 3c3 3 3 7 0 10" fill="none" stroke="#eee" /></svg>
    <svg width="22" height="14" viewBox="0 0 22 14" className="ml-[10px] shrink-0"><path d="M.500.500h21v13H.500z" fill="none" stroke="#eee" /><path d="M3 4h16M3 7h16M6 10h10" stroke="#eee" strokeDasharray="1 1" /></svg>
    <span className="ml-[11px] w-[12px] text-[13px] leading-none text-[#eee] shrink-0">中</span>
    <div className="ml-[13px] w-[16px] h-[18px] rounded-[3px] bg-[#e8401c] text-white text-[14px] font-bold flex items-center justify-center leading-none font-['Liberation_Sans'] shrink-0">S</div>
    <div className="ml-[17px] w-[60px] flex flex-col items-center leading-[18px] text-[#e8e8e8] shrink-0">
      <span className="text-[13px]">9:17</span>
      <span className="text-[12px]">2018/8/9</span>
    </div>
    <div className="ml-[19px] relative w-[16px] h-[16px] bg-white shrink-0 -mt-2">
      <div className="absolute left-[2px] top-[4px] w-[12px] h-px bg-black" />
      <div className="absolute left-[2px] top-[7px] w-[12px] h-px bg-black" />
      <div className="absolute left-[2px] top-[10px] w-[8px] h-px bg-black" />
      <div className="absolute left-[6px] top-[9px] w-[17px] h-[17px] rounded-full bg-[#555] border border-[#111] text-white text-[12px] font-bold flex items-center justify-center leading-none font-['Liberation_Sans']">1</div>
    </div>
  </div>
);

export default function App() {
  return (
    <div className="w-[1366px] h-[768px] relative overflow-hidden bg-[#f0f0f0] text-black text-[12px] font-['Liberation_Sans','Noto_Sans_CJK_SC',sans-serif] flex flex-col">
      {/* title bar */}
      <div className="h-[23px] bg-white flex items-center shrink-0">
        <div className="ml-[2px] w-[16px] h-[16px] rounded-[3px] bg-[#1495e8] flex items-center justify-center shrink-0">
          <svg width="10" height="12" viewBox="0 0 16 18"><path d="M8 1v12M4 4v5h8V4M8 13c0 2-2 3-4 2" fill="none" stroke="#fff" strokeWidth="2.400" /></svg>
        </div>
        <span className="ml-[5px] text-[13px] whitespace-nowrap w-[772px] overflow-hidden">广联达BIM钢筋算量软件 GGJ2013 - [C:\Users\Administrator.PC-20141127NRHM\Desktop\白龙村-2018-02-02-19-24-35(2666版).GGJ12</span>
        <svg width="11" height="1" viewBox="0 0 11 1" className="ml-auto"><path d="M0 .5h11" stroke="#111" /></svg>
        <svg width="11" height="11" viewBox="0 0 11 11" className="ml-[35px]"><path d="M.5 2.500h8v8h-8zM2.500 2.500v-2h8v8h-2" fill="none" stroke="#111" /></svg>
        <svg width="11" height="11" viewBox="0 0 11 11" className="ml-[35px] mr-[20px]"><path d="M0 0l11 11M11 0L0 11" stroke="#111" /></svg>
      </div>
      {/* menu */}
      <div className="h-[31px] bg-[#f6f6f6] flex items-center pl-[7px] shrink-0">
        <Menu t="文件(F)" c="w-[48px]" />
        <Menu t="编辑(E)" c="w-[49px]" />
        <Menu t="楼层(L)" c="w-[48px]" />
        <Menu t="构件(N)" c="w-[51px]" />
        <Menu t="绘图(D)" c="w-[52px]" />
        <Menu t="修改(M)" c="w-[54px]" />
        <Menu t="钢筋量(Q)" c="w-[64px]" />
        <Menu t="视图(V)" c="w-[50px]" />
        <Menu t="工具(T)" c="w-[49px]" />
        <Menu t="云应用(Y)" c="w-[61px]" />
        <Menu t="BIM应用(I)" c="w-[70px]" />
        <Menu t="在线服务(S)" c="w-[73px]" />
        <Menu t="帮助(H)" c="w-[51px]" />
        <Menu t="版本号(B)" c="w-[61px]" />
        <T i="chg" t="新建变更" />
        <Caret c="ml-[5px]" />
        <span className="ml-[27px] shrink-0">广小二</span>
        <div className="ml-[7px] w-[187px] h-[23px] bg-[#fbfbfb] shrink-0" />
        <div className="ml-[6px] shrink-0">{I.user}</div>
        <span className="ml-[3px] text-[12px] shrink-0">13907298339</span>
        <Caret c="ml-[5px]" />
        <span className="ml-[9px] shrink-0">造价豆:0</span>
        <div className="ml-[8px] shrink-0">{I.bell}</div>
        <More c="ml-[32px]" />
      </div>
      {/* row 1 */}
      <div className="h-[26px] flex items-center shrink-0">
        <Bar c="w-[152px] h-[26px]">
          <div className="ml-[4px]">{I.doc}</div>
          <div className="ml-[7px]">{I.open}</div>
          <Caret c="ml-[6px]" />
          <div className="ml-[6px]">{I.save}</div>
          <Sep c="ml-[5px]" />
          <div className="ml-[6px]">{I.undo}</div>
          <Caret c="ml-[5px]" />
          <More c="ml-[20px]" />
        </Bar>
        <Bar c="ml-px w-[547px] h-[26px]">
          <T i="def" t="定义" c="ml-[4px]" />
          <T i="sigma" t="汇总计算" c="ml-[8px]" />
          <T i="cloud" t="云检查" c="ml-[9px]" />
          <T i="level" t="平齐板顶" c="ml-[8px]" />
          <T i="find" t="查找图元" c="ml-[9px]" />
          <T i="rebar" t="查看钢筋量" c="ml-[7px]" />
          <T i="batch" t="批量选择" c="ml-[8px]" g />
          <More c="ml-[39px]" />
        </Bar>
        <Bar c="ml-[3px] w-[663px] h-[26px]">
          <T i="sq" t="二维" c="ml-[4px]" />
          <Caret c="ml-[7px]" />
          <T i="cube" t="俯视" c="ml-[8px]" />
          <Caret c="ml-[7px]" />
          <T i="orbit" t="动态观察" c="ml-[6px]" />
          <T i="part" t="局部三维" c="ml-[8px]" />
          <Sep c="ml-[7px]" />
          <T i="fit" t="全屏" c="ml-[6px]" />
          <T i="mag" t="缩放" c="ml-[8px]" />
          <Caret c="ml-[6px]" />
          <T i="hand" t="平移" c="ml-[7px]" />
          <Caret c="ml-[6px]" />
          <T i="turn" t="屏幕旋转" c="ml-[7px]" />
          <Caret c="ml-[2px]" />
          <Sep c="ml-[6px]" />
          <T i="floors" t="选择楼层" c="ml-[5px]" />
          <More c="ml-[31px]" />
        </Bar>
      </div>
      {/* body */}
      <div className="h-[622px] mt-[4px] flex shrink-0">
        <Left />
        <div className="ml-[5px] flex-1 min-w-0 flex flex-col">
          <Bar c="w-[791px] h-[24px]">
            <Grip c="ml-[4px]" />
            <T i="brush" t="删除" c="ml-[5px]" />
            <Sep c="ml-[8px]" />
            <T i="copy" t="复制" c="ml-[5px]" />
            <T i="mirror" t="镜像" c="ml-[8px]" />
            <Sep c="ml-[7px]" />
            <T i="move" t="移动" c="ml-[6px]" />
            <T i="rot" t="旋转" c="ml-[8px]" />
            <Sep c="ml-[8px]" />
            <T i="ext" t="延伸" c="ml-[5px]" />
            <T i="trim" t="修剪" c="ml-[8px]" />
            <Sep c="ml-[7px]" />
            <T i="brk" t="打断" c="ml-[6px]" />
            <T i="mrg" t="合并" c="ml-[8px]" />
            <T i="spl" t="分割" c="ml-[8px]" g />
            <Sep c="ml-[9px]" />
            <T i="alg" t="对齐" c="ml-[4px]" />
            <Caret c="ml-[3px]" />
            <T i="off" t="偏移" c="ml-[6px]" />
            <T i="str" t="拉伸" c="ml-[8px]" />
            <Sep c="ml-[7px]" />
            <T i="setg" t="设置夹点" c="ml-[6px]" g />
          </Bar>
          <div className="h-[25px] mt-[3px] flex shrink-0">
            <Bar c="w-[638px] h-[25px]">
              <Grip c="ml-[4px]" />
              <Sel t="首层" c="ml-[2px] w-[59px] pr-[3px]" />
              <Sel t="梁" c="ml-px w-[68px]" />
              <Sel t="梁" c="ml-[3px] w-[68px]" />
              <Sel t="L-2(1)" c="ml-[4px] w-[68px]" />
              <Sel t="分层1" c="ml-[5px] w-[68px]" />
              <Sep c="ml-[6px]" />
              <T i="attr" t="属性" c="ml-[6px]" />
              <T i="edit" t="编辑钢筋" c="ml-[8px]" />
              <T i="list" t="构件列表" c="ml-[9px]" />
              <T i="pick" t="拾取构件" c="ml-[7px]" />
            </Bar>
            <Bar c="ml-[3px] w-[422px] h-[25px]">
              <Grip c="ml-[4px]" />
              <T i="two" t="两点" c="ml-[5px]" />
              <T i="par" t="平行" c="ml-[7px]" />
              <T i="ang" t="点角" c="ml-[8px]" />
              <Caret c="ml-[5px]" />
              <T i="arc3" t="三点辅轴" c="ml-[8px]" />
              <Caret c="ml-[5px]" />
              <T i="brush" t="删除辅轴" c="ml-[7px]" />
              <T i="dim" t="尺寸标注" c="ml-[9px]" />
              <Caret c="ml-[6px]" />
            </Bar>
          </div>
          <div className="h-[28px] mt-[4px] flex shrink-0">
            <Bar c="w-[1159px] h-[28px]">
              <Grip c="ml-[4px]" />
              <T i="sel" t="选择" c="ml-[5px]" />
              <Caret c="ml-[6px]" />
              <Sep c="ml-[6px]" />
              <T i="line" t="直线" c="ml-[6px]" />
              <T i="plen" t="点加长度" c="ml-[8px]" />
              <T i="arc" t="三点画弧" c="ml-[8px]" />
              <Caret c="ml-[6px]" />
              <div className="ml-[5px] w-[56px] h-[22px] bg-white flex items-center justify-end pr-[3px] shrink-0"><Caret /></div>
              <T i="sq" t="矩形" c="ml-[4px]" />
              <Sep c="ml-[7px]" />
              <T i="smart" t="智能布置" c="ml-[7px]" />
              <Caret c="ml-px" />
              <Sep c="ml-[6px]" />
              <T i="funnel" t="修改梁段属性" c="ml-[7px]" />
              <T i="mark" t="原位标注" c="ml-[5px] w-[74px] h-[21px] pl-[1px] border border-[#1a7fd4] bg-[#e8f2fb]" />
              <Caret c="ml-[2px]" />
              <T i="rex" t="重提梁跨" c="ml-[7px]" />
              <Caret c="ml-[6px]" />
              <T i="broom" t="梁跨数据复制" c="ml-[7px]" />
              <Caret c="ml-[6px]" />
              <T i="bid" t="批量识别梁支座" c="ml-[7px]" />
              <T i="app" t="应用到同名梁" c="ml-[8px]" />
              <More c="ml-[65px]" />
            </Bar>
            <Bar c="ml-[3px] w-[34px] h-[28px]"><Grip c="ml-[3px]" /></Bar>
          </div>
          <Canvas />
          <Status />
          {/* grid toolbar */}
          <div className="h-[27px] mt-[3px] bg-gradient-to-b from-[#fcfcfc] to-[#f4f4f4] flex items-center shrink-0">
            <svg width="11" height="10" viewBox="0 0 11 10" className="ml-[1px] -mt-[14px] shrink-0"><path d="M.5.5h10v9H.5z" fill="#eee" stroke="#666" /><path d="M2 2l7 6M9 2L2 8" stroke="#555" /></svg>
            <T i="doc" t="复制跨数据" c="ml-[6px]" />
            <T i="doc" t="粘贴跨数据" c="ml-[8px]" g />
            <span className="ml-[9px] text-[#a8a8a8] shrink-0">输入当前列数据</span>
            <span className="ml-[10px] text-[#a8a8a8] shrink-0">删除当前列数据</span>
            <span className="ml-[10px] shrink-0">页面设置</span>
            <span className="ml-[10px] shrink-0">调换起始跨</span>
            <span className="ml-[10px] shrink-0">悬臂钢筋代号</span>
          </div>
          <Table />
        </div>
      </div>
      {/* status line */}
      <div className="h-[20px] mt-[2px] flex gap-[2px] shrink-0">
        <Cell c="w-[148px]"><Sim t="X=110322 Y=2540" /></Cell>
        <Cell c="w-[79px]"><Sim t="层高:4.5m" /></Cell>
        <Cell c="w-[98px]"><Sim t="底标高:-0.05m" /></Cell>
        <Cell c="w-[48px]"><Sim t="1(3)" /></Cell>
        <Cell c="w-[914px]"><Sim t="按鼠标左键选择梁图元,按右键或ESC退出;可以通过回车键及shift+" /><span className="tracking-[2px]">”→←↑”</span><span>光标键在跨之间、上下输入框之间进行切换</span></Cell>
        <Cell c="w-[70px]"><Sim t="366.2 FPS" /></Cell>
      </div>
      <Taskbar />

      {/* overlays */}
      <div className="absolute left-[780px] -top-[26px] w-[45px] h-[45px] rounded-full bg-gradient-to-b from-[#6fd24a] to-[#3ca82c] border-2 border-[#d8e0d8] shadow-[0_1px_3px_#666] flex items-end justify-center pb-[5px] text-white font-bold text-[12px] leading-none">62</div>
      <div className="absolute left-[410px] top-[66px] w-[204px] h-[22px] bg-[#eef5fb] border border-[#c4d8ec] rounded-[2px] flex items-center pl-[29px] gap-[7px] text-[#1f78d1]">
        <span className="text-[15px] font-bold leading-none">中</span>
        <span className="text-[14px] font-bold leading-none w-[14px]">°,</span>
        <svg width="16" height="16" viewBox="0 0 16 16"><circle cx="8" cy="8" r="7" fill="#fff" stroke="#1f78d1" strokeWidth="1.500" /><path d="M5 6v1M11 6v1M5 10c2 2 4 2 6 0" fill="none" stroke="#1f78d1" strokeWidth="1.500" /></svg>
        <svg width="14" height="16" viewBox="0 0 14 16"><rect x="4" y="0" width="6" height="10" rx="3" fill="#1f78d1" /><path d="M1 7c0 6 12 6 12 0M7 12v4M4 15.500h6" fill="none" stroke="#1f78d1" /></svg>
        <svg width="16" height="14" viewBox="0 0 16 14"><rect width="16" height="14" rx="2" fill="#1f78d1" /><path d="M2 4h12M2 7h12M4 10h8" stroke="#fff" strokeDasharray="2 1" /></svg>
        <svg width="16" height="16" viewBox="0 0 16 16"><circle cx="7" cy="4" r="3" fill="#b4c4d4" /><path d="M1 14c0-6 12-6 12 0z" fill="#b4c4d4" /><rect x="6" y="9" width="10" height="6" fill="#dce4ec" stroke="#b4c4d4" /></svg>
        <svg width="16" height="14" viewBox="0 0 16 14"><path d="M5 0l3 1 3-1 5 3-2 3-2-1v9H4V5L2 6 0 3z" fill="#1f78d1" /></svg>
        <svg width="16" height="16" viewBox="0 0 16 16"><path d="M2 14l7-7c-1-3 1-6 5-6l-2 3 2 2 2-2c0 4-3 6-6 5l-6 6z" fill="#1f78d1" /></svg>
      </div>
      <div className="absolute left-[410px] top-[63px] w-[25px] h-[26px] rounded-[5px] bg-[#ee4a1c] border-2 border-white text-white text-[20px] font-bold flex items-center justify-center leading-none font-['Liberation_Sans']">S</div>
      <div className="absolute left-[746px] top-[124px] w-[119px] h-[69px] border-[7px] border-[#ff0000]" />
      <div className="absolute left-[165px] top-[518px] w-[211px] h-[91px] border-[7px] border-[#ff0000]" />
    </div>
  );
}
